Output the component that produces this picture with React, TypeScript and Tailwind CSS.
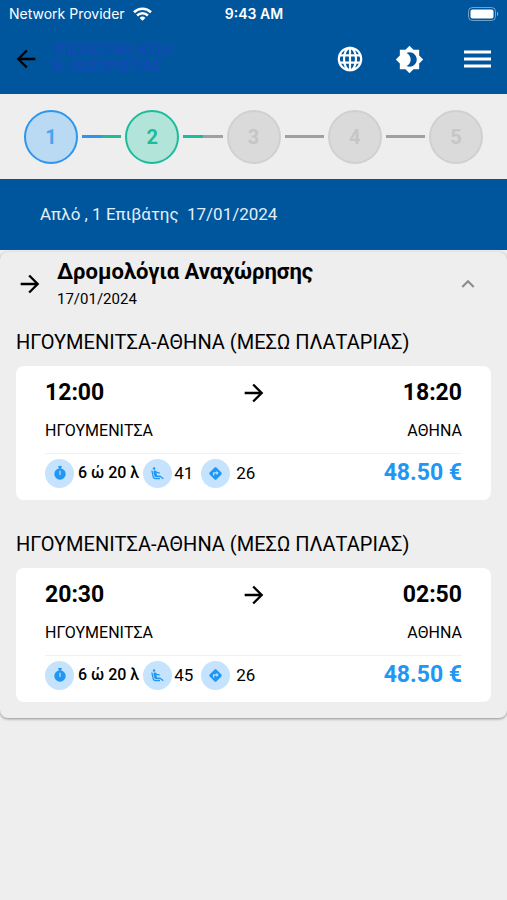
import type { ReactNode } from 'react';
import {
  MdArrowBack,
  MdArrowForward,
  MdAirlineSeatReclineExtra,
  MdBrightness4,
  MdDirections,
  MdKeyboardArrowUp,
} from 'react-icons/md';
import clsx from 'clsx';

interface Trip {
  id: number;
  route: string;
  departure: string;
  arrival: string;
  from: string;
  to: string;
  duration: string;
  seats: number;
  stops: number;
  price: string;
}

const TRIPS: Trip[] = [
  {
    id: 1,
    route: 'ΗΓΟΥΜΕΝΙΤΣΑ-ΑΘΗΝΑ (ΜΕΣΩ ΠΛΑΤΑΡΙΑΣ)',
    departure: '12:00',
    arrival: '18:20',
    from: 'ΗΓΟΥΜΕΝΙΤΣΑ',
    to: 'ΑΘΗΝΑ',
    duration: '6 ώ 20 λ',
    seats: 41,
    stops: 26,
    price: '48.50 €',
  },
  {
    id: 2,
    route: 'ΗΓΟΥΜΕΝΙΤΣΑ-ΑΘΗΝΑ (ΜΕΣΩ ΠΛΑΤΑΡΙΑΣ)',
    departure: '20:30',
    arrival: '02:50',
    from: 'ΗΓΟΥΜΕΝΙΤΣΑ',
    to: 'ΑΘΗΝΑ',
    duration: '6 ώ 20 λ',
    seats: 45,
    stops: 26,
    price: '48.50 €',
  },
];

const PENDING = 'border-[#d0d0d0] bg-[#dadada] text-[#c6c6c6]';

// line = colour of the connector halves that touch the step
const STEPS = [
  { n: 1, circle: 'border-[#2f95ec] bg-[#badaf3] text-[#4da3ee]', line: 'bg-[#2f95ec]' },
  { n: 2, circle: 'border-[#1bbc9b] bg-[#b3e4d9] text-[#1bbc9b]', line: 'bg-[#1bbc9b]' },
  { n: 3, circle: PENDING, line: 'bg-[#a0a0a0]' },
  { n: 4, circle: PENDING, line: 'bg-[#a0a0a0]' },
  { n: 5, circle: PENDING, line: 'bg-[#a0a0a0]' },
];

function WifiIcon() {
  return (
    <svg width="19" height="14" viewBox="0 0 19 14" fill="none" stroke="currentColor" strokeWidth="2.6">
      <path d="M1 5.2a12.2 12.2 0 0 1 17 0" />
      <path d="M4.1 8.5a7.7 7.7 0 0 1 10.8 0" />
      <path d="M9.5 13.8 6.6 10.9a4.2 4.2 0 0 1 5.8 0z" fill="currentColor" stroke="none" />
    </svg>
  );
}

function BatteryIcon() {
  return (
    <svg width="31" height="14" viewBox="0 0 31 14" fill="none">
      <rect x="0.5" y="0.5" width="27" height="13" rx="4" stroke="#fff" strokeOpacity="0.45" />
      <rect x="2.5" y="2.5" width="23" height="9" rx="2" fill="#fff" />
      <path d="M29 4.8c1.6.6 1.6 3.8 0 4.4z" fill="#fff" fillOpacity="0.5" />
    </svg>
  );
}

function GlobeIcon() {
  return (
    <svg width="26" height="26" viewBox="0 0 26 26" fill="none" stroke="currentColor" strokeWidth="2.2">
      <circle cx="13" cy="13" r="11.2" />
      <ellipse cx="13" cy="13" rx="6" ry="11.2" />
      <path d="M13 1.8v22.4M2.6 9.4h20.8M2.6 16.6h20.8" />
    </svg>
  );
}

function StopwatchIcon() {
  return (
    <svg width="12" height="14" viewBox="0 0 12 14" fill="currentColor">
      <path d="M4.2 0h3.6v1.6H7v1.2H5V1.6h-.8z" />
      <circle cx="6" cy="8" r="5.7" />
      <path d="M6 5v3.4" stroke="#c5e3fc" strokeWidth="1.2" strokeLinecap="round" />
    </svg>
  );
}

function StatusBar() {
  return (
    <div className="flex h-7 items-center px-2 text-white">
      <div className="flex flex-1 items-center gap-2 pl-px font-[Inter,sans-serif] text-sm">
        <span>Network Provider</span>
        <WifiIcon />
      </div>
      <span className="font-[Inter,sans-serif] text-sm font-semibold">9:43 AM</span>
      <div className="flex flex-1 justify-end">
        <BatteryIcon />
      </div>
    </div>
  );
}

function Header() {
  return (
    <header className="bg-[#00569d]">
      <StatusBar />
      <div className="flex h-[66px] items-center pr-4 pb-1 pl-3">
        <button aria-label="Πίσω" className="text-black">
          <MdArrowBack size={28} />
        </button>
        <div className="ml-3 flex-1 font-black whitespace-nowrap text-[#104ab2]">
          <div className="text-sm leading-[14px]">ΥΠΕΡΑΣΤΙΚΟ ΚΤΕΛ</div>
          <div className="text-[15px] leading-[18px]">Ν. ΘΕΣΠΡΩΤΙΑΣ</div>
        </div>
        <div className="flex items-center gap-8 text-white">
          <button aria-label="Γλώσσα">
            <GlobeIcon />
          </button>
          <button aria-label="Θέμα">
            <MdBrightness4 size={29} />
          </button>
          <button aria-label="Μενού" className="ml-2">
            <svg width="27" height="20" viewBox="0 0 27 20" stroke="currentColor" strokeWidth="2.8">
              <path d="M0 3h27M0 10h27M0 17h27" />
            </svg>
          </button>
        </div>
      </div>
    </header>
  );
}

function Stepper() {
  return (
    <ol className="flex h-[85px] items-center px-6">
      {STEPS.map((step, i) => (
        <li key={step.n} className={clsx('flex items-center', i > 0 && 'flex-1')}>
          {i > 0 && (
            <div className="mx-1 flex h-[3px] flex-1">
              <div className={clsx('flex-1', STEPS[i - 1].line)} />
              <div className={clsx('flex-1', step.line)} />
            </div>
          )}
          <div
            className={clsx(
              'flex size-[54px] items-center justify-center rounded-full border-2 text-xl font-bold',
              step.circle
            )}
          >
            {step.n}
          </div>
        </li>
      ))}
    </ol>
  );
}

function Badge({ children }: { children: ReactNode }) {
  return (
    <span className="flex size-[29px] items-center justify-center rounded-full bg-[#c5e3fc] text-[#2196f3]">
      {children}
    </span>
  );
}

function TripCard({ trip }: { trip: Trip }) {
  return (
    <article>
      <h3 className="text-xl leading-6">{trip.route}</h3>
      <div className="mt-3 rounded-lg bg-white px-[29px] pt-[13px] pb-3">
        <div className="grid grid-cols-3 items-center text-[23px] leading-7 font-bold">
          <span>{trip.departure}</span>
          <MdArrowForward size={28} className="justify-self-center" />
          <span className="text-right">{trip.arrival}</span>
        </div>
        <div className="mt-3 flex justify-between text-base leading-6">
          <span>{trip.from}</span>
          <span>{trip.to}</span>
        </div>
        <div className="mt-2.5 flex items-center border-t border-[#f2f2f2] pt-1 text-[17px] leading-[30px]">
          <Badge>
            <StopwatchIcon />
          </Badge>
          <span className="mx-1 text-base leading-[30px] font-medium">{trip.duration}</span>
          <Badge>
            <MdAirlineSeatReclineExtra size={15} />
          </Badge>
          <span className="mr-2 ml-0.5">{trip.seats}</span>
          <Badge>
            <MdDirections size={15} />
          </Badge>
          <span className="ml-1.5">{trip.stops}</span>
          <span className="ml-auto text-[23px] font-bold text-[#2196f3]">{trip.price}</span>
        </div>
      </div>
    </article>
  );
}

export default function App() {
  return (
    <div className="min-h-screen bg-[#eeeeee] font-[Roboto,'Noto_Sans',sans-serif] text-black">
      <Header />
      <Stepper />
      <div className="bg-[#00569d] px-10 pt-[23px] pb-6 text-[17px] leading-6 whitespace-pre text-[#e4eef6]">
        {'Απλό , 1 Επιβάτης  17/01/2024'}
      </div>

      <main className="mt-0.5 rounded-lg px-4 pb-4 shadow-[0_1px_3px_rgba(0,0,0,0.4)]">
        <div className="flex items-center pt-[5px]">
          <MdArrowForward size={28} />
          <div className="ml-[13px] flex-1">
            <h2 className="text-[22px] leading-[30px] font-bold">Δρομολόγια Αναχώρησης</h2>
            <p className="text-[15px] leading-6">17/01/2024</p>
          </div>
          <button aria-label="Σύμπτυξη" className="mr-2.5 text-[#8c8c8c]">
            <MdKeyboardArrowUp size={26} />
          </button>
        </div>
        <div className="mt-[19px] space-y-8">
          {TRIPS.map((trip) => (
            <TripCard key={trip.id} trip={trip} />
          ))}
        </div>
      </main>
    </div>
  );
}
